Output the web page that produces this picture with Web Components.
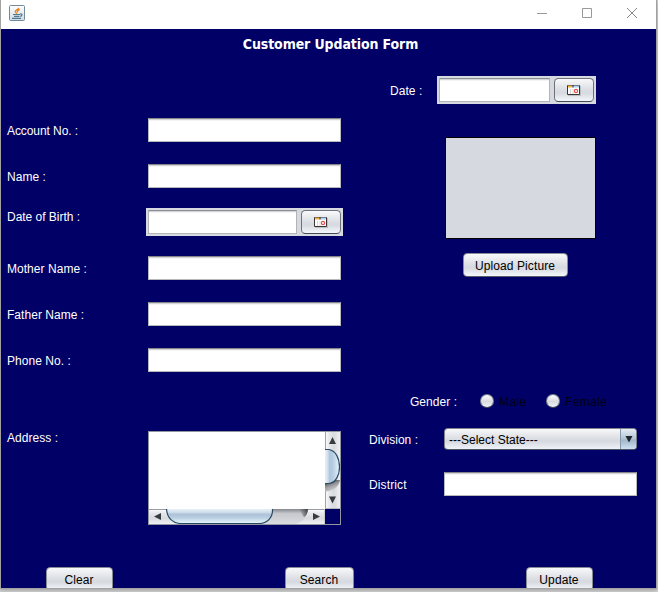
<!DOCTYPE html>
<html lang="en">
<head>
<meta charset="utf-8">
<title>Customer Updation Form</title>
<style>
html,body{margin:0;height:100%;overflow:hidden;background:#d2d2d2}
body{font:12px/14px "Liberation Sans",Arial,sans-serif;color:#fff}
</style>
</head>
<body>
<app-window></app-window>
<script>
function define(name, html) {
  const t = document.createElement('template');
  t.innerHTML = html;
  customElements.define(name, class extends HTMLElement {
    constructor() {
      super();
      this.attachShadow({mode: 'open'}).append(t.content.cloneNode(true));
    }
  });
}

define('title-bar', `<style>
:host{display:flex;height:29px;background:#fff;align-items:flex-start;justify-content:space-between;box-sizing:border-box;padding:0 19px 0 8px}
.java{margin-top:5px}
.controls{display:flex;gap:35px;margin-top:8px}
svg{display:block}
</style>
<svg class="java" width="16" height="16" viewBox="0 0 16 16">
<defs><linearGradient id="g" x2="0" y2="1"><stop stop-color="#fff"/><stop offset="1" stop-color="#cfdbe4"/></linearGradient></defs>
<rect x=".5" y=".5" width="15" height="15" rx="1" fill="url(#g)" stroke="#738a9b"/>
<path d="M9.300 2.800C10.300 4.500 6 5 6.300 6.600C6.500 7.600 7.600 8 8 8.700M10.700 4.500C8.800 5.200 8 6 8.800 7.400" fill="none" stroke="#e98524" stroke-width="1.400"/>
<path d="M4 9.500H11M5 11.300H10.500M3 13.300H12M11 9C13.800 8.200 13.400 11.300 11.200 11.200" fill="none" stroke="#51768f" stroke-width="1.200"/>
</svg>
<div class="controls">
<svg width="10" height="10"><path d="M0 5.500H10" stroke="#999"/></svg>
<svg width="10" height="10"><path d="M.5 .5H9.500V9.500H.5Z" fill="none" stroke="#999"/></svg>
<svg width="10" height="10"><path d="M0 0L10 10M10 0L0 10" stroke="#888" fill="none"/></svg>
</div>`);

define('text-field', `<style>
:host{display:block;box-sizing:border-box;width:var(--w,193px);height:24px;background:#fff;border:1px solid #b7b8bb;border-top-color:#85868a;box-shadow:inset 0 1px #d3d4d6,inset 0 2px #f4f4f5}
</style>`);

define('swing-button', `<style>
:host{display:flex;flex:none;box-sizing:border-box;align-items:center;justify-content:center;width:var(--w);height:24px;padding:1px 1px 0 0;color:#000;border:1px solid #888b93;border-bottom-color:#555a65;border-radius:4.500px;background:linear-gradient(#f8f9fa 0,#e9ebee 25%,#d8dbe1 55%,#d7dae0 65%,#f0f3f8 95%,#f3f6fb);white-space:nowrap;letter-spacing:.1px}
</style><slot></slot>`);

define('date-chooser', `<style>
:host{display:flex;box-sizing:border-box;height:28px;padding:2px;gap:4px;background:#d6d9df;width:var(--cw)}
text-field{flex:1;border-color:#8d8f96 #b2b4b9 #b2b4b9}
swing-button{--w:40px;border-color:#6d727c;border-bottom-color:#454a54;padding:1px 0 0}
svg{display:block}
</style>
<text-field></text-field>
<swing-button><svg width="14" height="11" viewBox="0 0 14 11">
<path d="M1 1H14V11H1Z" fill="#aaa" opacity=".6"/>
<path d="M.5 .5H12.500V9.500H.5Z" fill="#fff" stroke="#3a3332"/>
<path d="M1 .5H5V2.500H1Z" fill="#f4b53c"/><path d="M7 .5H12V2.500H7Z" fill="#a5d3f3"/><path d="M5 .5H7V2.500H5Z" fill="#7b7876"/>
<path d="M3.500 4V9M6 4V9" stroke="#d6d6d6"/>
<circle cx="9" cy="6" r="1.600" fill="#fff" stroke="#e4524e" stroke-width="1.200"/>
</svg></swing-button>`);

define('form-row', `<style>
:host{display:flex;align-items:center;height:24px}
.label{width:var(--lw,141px);flex:none;padding-top:2px;white-space:nowrap;box-sizing:border-box;letter-spacing:var(--ls,.04px)}
:host([top]){align-items:flex-start}
:host([raised]) .label{padding:0 0 11px}
:host([top]) .label{padding:0}
</style><div class="label"><slot name="label"></slot></div><slot></slot>`);

define('radio-option', `<style>
:host{display:flex;align-items:center;color:#000014;gap:5px;height:16px}
i{width:14px;height:14px;flex:none;border-radius:50%;box-sizing:border-box;border:1px solid #7c7f8b;border-bottom-color:#4a4d5e;background:linear-gradient(#fcfcfc,#d7dadf 55%,#f1f3f8)}
span{padding-top:1px;letter-spacing:.4px}
</style><i></i><span><slot></slot></span>`);

define('combo-box', `<style>
:host{display:flex;box-sizing:border-box;width:193px;height:22px;color:#000;border:1px solid #80838c;border-bottom-color:#4d5568;border-radius:4px;overflow:hidden;background:linear-gradient(#f8f9fa,#e5e7eb 30%,#d5d8de 60%,#eef1f6)}
span{flex:1;padding:4px 0 0 4px}
.arrow{width:15px;display:flex;align-items:center;justify-content:center;border-left:1px solid #8899ab;background:linear-gradient(#e6edf3,#bccddd 40%,#a3b8cc 58%,#cde1f2)}
</style><span><slot></slot></span><div class="arrow"><svg width="8" height="7"><path d="M.5 0H7.500L4 6.500Z" fill="#22262b"/></svg></div>`);

define('scroll-area', `<style>
:host{display:grid;grid-template:77px 15px/176px 15px;box-sizing:border-box;width:193px;height:94px;border:1px solid #92959e}
.view{background:#fff}
svg{display:block}
</style>
<div class="view"></div>
<svg width="15" height="77" viewBox="0 0 15 77">
<defs>
<linearGradient id="vb"><stop stop-color="#fff"/><stop offset=".25" stop-color="#e8e9ec"/><stop offset=".6" stop-color="#d7dade"/><stop offset="1" stop-color="#eff0f3"/></linearGradient>
<linearGradient id="vt"><stop stop-color="#e9f1f8"/><stop offset=".2" stop-color="#d0deeb"/><stop offset=".32" stop-color="#b0c5d9"/><stop offset=".55" stop-color="#b7cde1"/><stop offset="1" stop-color="#e4f6ff"/></linearGradient>
<linearGradient id="vs" x2=".5" y2="1"><stop stop-color="#222327"/><stop offset=".55" stop-color="#999ba0"/><stop offset="1" stop-color="#d5d7db"/></linearGradient>
</defs>
<rect width="15" height="77" fill="url(#vb)"/><path d="M.5 0V77" stroke="#a0a2a8"/>
<path d="M0 48H15C14 55 8 59.500 0 59.500Z" fill="url(#vs)"/>
<path d="M0 17.500H4C18 20 18 50 4 51.500H0" fill="url(#vt)" stroke="#294862" stroke-width="1.200"/>
<path d="M7.500 5L11 12H4Z M4 64.500H11L7.500 71.500Z" fill="#373a3e"/>
<path d="M0 76.500H15" stroke="#b6b7bb"/>
</svg>
<svg width="176" height="15" viewBox="0 0 176 15">
<defs>
<linearGradient id="hb" x2="0" y2="1"><stop stop-color="#fff"/><stop offset=".25" stop-color="#e8e9ec"/><stop offset=".6" stop-color="#d7dade"/><stop offset="1" stop-color="#eff0f3"/></linearGradient>
<linearGradient id="ht" x2="0" y2="1"><stop stop-color="#e9f1f8"/><stop offset=".25" stop-color="#cbdbe9"/><stop offset=".36" stop-color="#adc2d7"/><stop offset=".6" stop-color="#b9cee1"/><stop offset="1" stop-color="#e9faff"/></linearGradient>
<linearGradient id="hk" x2="0" y2="1"><stop stop-color="#85878c"/><stop offset=".3" stop-color="#c6c8cc"/><stop offset="1" stop-color="#d9dce0"/></linearGradient>
<linearGradient id="he"><stop stop-color="#333" stop-opacity="0"/><stop offset="1" stop-color="#222" stop-opacity=".75"/></linearGradient>
</defs>
<rect width="176" height="15" fill="url(#hb)"/><path d="M0 .5H176" stroke="#999ca2"/>
<path d="M115 0H159C158 8 154 14 145 15H110Z" fill="url(#hk)"/>
<path d="M150 0H159C159 4 157 7 155 8Q152 4 150 0Z" fill="url(#he)"/>
<path d="M17.500 0C18 9 24 14.500 32 14.500H110C118 14.500 124 9 123.500 0" fill="url(#ht)" stroke="#294862" stroke-width="1.200"/>
<path d="M5 7.500L12 4V11Z M171 7.500L164 4V11Z" fill="#373a3e"/>
<path d="M175.500 0V15" stroke="#c9cbd0"/>
</svg>`);

define('customer-form', `<style>
:host{display:flex;flex-direction:column;height:559px;background:#006;overflow:hidden}
h1{font:bold 14px/17px "DejaVu Sans Condensed","DejaVu Sans",sans-serif;font-stretch:condensed;letter-spacing:-.11px;margin:7px 0 0;padding-left:4px;text-align:center}
.columns{display:flex;height:514px;flex:none}
.left{width:362px;box-sizing:border-box;padding:65px 0 0 6px;display:flex;flex-direction:column;gap:22px}
.right{flex:1;padding:23px 0 0 6px}
.dob{height:28px;margin:-2px 0;--lw:139px;--cw:197px;--ls:-.02px}
.address{height:94px;margin-top:37px}
.date{height:28px;margin-left:21px;--lw:47px;--cw:159px}
.picture{width:149px;height:100px;margin:33px 0 0 76px;background:#d6d9df;border:1px solid #000}
.upload{margin:14px 0 0 94px;--w:105px}
.gender{margin:112px 0 0 41px;--lw:70px}
radio-option{width:66px}
.division{margin-top:14px;--lw:75px}
.district{margin-top:21px;--lw:75px;--ls:.12px}
.actions{display:flex;justify-content:space-between;padding:0 63px 0 45px;flex:none}
</style>
<h1>Customer Updation Form</h1>
<div class="columns">
<div class="left">
<form-row style="--ls:-.08px"><span slot="label">Account No. :</span><text-field></text-field></form-row>
<form-row><span slot="label">Name :</span><text-field></text-field></form-row>
<form-row class="dob" raised><span slot="label">Date of Birth :</span><date-chooser></date-chooser></form-row>
<form-row><span slot="label">Mother Name :</span><text-field></text-field></form-row>
<form-row><span slot="label">Father Name :</span><text-field></text-field></form-row>
<form-row><span slot="label">Phone No. :</span><text-field></text-field></form-row>
<form-row class="address" top><span slot="label">Address :</span><scroll-area></scroll-area></form-row>
</div>
<div class="right">
<form-row class="date"><span slot="label">Date :</span><date-chooser></date-chooser></form-row>
<div class="picture"></div>
<swing-button class="upload">Upload Picture</swing-button>
<form-row class="gender"><span slot="label">Gender :</span><radio-option>Male</radio-option><radio-option>Female</radio-option></form-row>
<form-row class="division"><span slot="label">Division :</span><combo-box>---Select State---</combo-box></form-row>
<form-row class="district"><span slot="label">District</span><text-field></text-field></form-row>
</div>
</div>
<div class="actions">
<swing-button style="--w:67px">Clear</swing-button>
<swing-button style="--w:69px">Search</swing-button>
<swing-button style="--w:67px">Update</swing-button>
</div>`);

define('app-window', `<style>
:host{display:block;width:655px;height:588px;border:1px solid #a2a2a2;border-top:0;box-shadow:0 1px 4px #999}
</style><title-bar></title-bar><customer-form></customer-form>`);
</script>
</body>
</html>
